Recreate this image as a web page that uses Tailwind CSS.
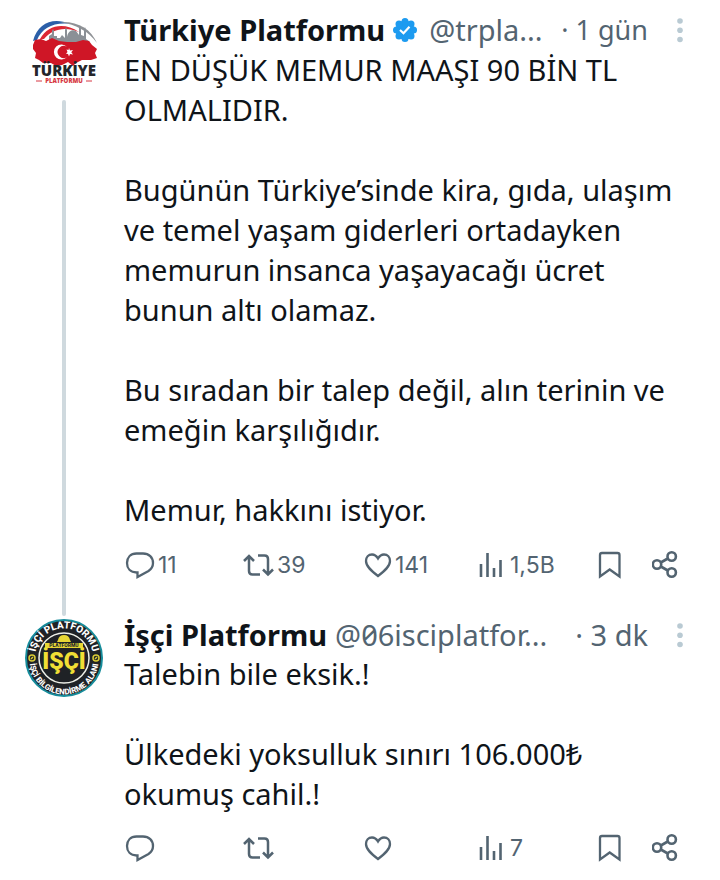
<!DOCTYPE html>
<html lang="tr">
<head>
<meta charset="utf-8">
<meta name="viewport" content="width=device-width, initial-scale=1">
<title>Gönderi</title>
<script src="https://cdn.jsdelivr.net/npm/@tailwindcss/browser@4"></script>
</head>
<body class="bg-white font-['Noto_Sans',sans-serif] text-[#0f1419]">
<svg class="hidden" aria-hidden="true">
  <symbol id="reply" viewBox="0 0 32 32"><path d="M13.500 28V23.500H12.500C6.500 23.500 3 19.500 3 14S6.500 4.500 12.500 4.500H19C25 4.500 29 8.500 29 14C29 17.500 27.500 20 24.500 22Z" fill="none" stroke="currentColor" stroke-width="2.300"/></symbol>
  <symbol id="repost" viewBox="0 0 32 32"><path d="M1 12 6 7 11 12M6 8V22Q6 25.500 9.500 25.500H17M15 6.500H21.500Q25 6.500 25 10V25M20 20.500 25 25.500 30 20.500" fill="none" stroke="currentColor" stroke-width="2.500"/></symbol>
  <symbol id="like" viewBox="0 0 32 32"><path d="M15 27C8.500 22 3 17.500 3 12C3 8 5.500 5.500 9 5.500C11.800 5.500 13.500 7 15 9.500C16.500 7 18.200 5.500 21 5.500C24.500 5.500 27 8 27 12C27 17.500 21.500 22 15 27Z" fill="none" stroke="currentColor" stroke-width="2.300"/></symbol>
  <symbol id="views" viewBox="0 0 32 32"><path d="M3 28V15M9.500 28V4M16 28V19M22.500 28V11" stroke="currentColor" stroke-width="2.600"/></symbol>
  <symbol id="save" viewBox="0 0 32 32"><path d="M4 27.500V6Q4 4 6 4H21.500Q23.500 4 23.500 6V27.500L13.700 20.500Z" fill="none" stroke="currentColor" stroke-width="2.300"/></symbol>
  <symbol id="share" viewBox="0 0 32 32"><g fill="none" stroke="currentColor" stroke-width="2.600"><circle cx="5" cy="15.500" r="4.200"/><circle cx="19.700" cy="7.500" r="4.200"/><circle cx="19.700" cy="23.500" r="4.200"/><path d="M8.800 13.500 15.800 9.500M8.800 17.500 15.800 21.500"/></g></symbol>
  <symbol id="more" viewBox="0 0 8 28"><g fill="#b9cad3"><circle cx="4" cy="5" r="2.800"/><circle cx="4" cy="14.300" r="2.800"/><circle cx="4" cy="23.500" r="2.800"/></g></symbol>
</svg>
<main>
  <article class="flex gap-5 pr-9 pl-6">
    <div class="flex w-20 shrink-0 flex-col items-center gap-2 pt-3">
      <svg class="size-20 shrink-0" viewBox="0 0 80 80" role="img" aria-label="Türkiye Platformu">
        <path d="M9 29C14 10 30 5 46 12C30 10 18 16 13 28Z" fill="#2b5fa8"/>
        <path d="M16 27C24 13 40 10 55 20C41 14 28 17 20 27Z" fill="#dc2733"/>
        <path d="M36 10C54 9 67 17 73 31C64 19 53 13 36 10Z" fill="#8f9296"/>
        <path d="M25 27V24L28 22V19L29 17 30 19V24H33V26H36L38 23 41 26V18L42 15 43 18V25C44 19 48 17 52 19L55 23V16L56 13 57 16V23L60 24V18L61 15 62 18V27L66 30H25Z" fill="#8b9096"/>
        <path d="M9 33 11 28 17 27 22 29 28 26 35 29 43 30 52 30 59 28 65 29 68 33 73 37 71 41 73 46 67 48 58 48 52 51 49 54 44 50 38 53 32 54 27 51 19 51 15 48 11 46 12 41 9 37Z" fill="#cf1626"/>
        <path d="M43 35A7.500 7.500 0 1 0 43 45A6 6 0 1 1 43 35Z" fill="white"/>
        <path d="m45 36 1 2.500 3-.5-1.700 2.300 1.700 2.200-3-.5-1 2.500-1-2.500-2-.3 1.500-1.700-1-2.500 2 .5Z" fill="white"/>
        <text x="40" y="64" text-anchor="middle" font-family="Open Sans, sans-serif" font-size="15" font-weight="800" fill="#24262b">TÜRKİYE</text>
        <path d="M12 69H18M62 69H68" stroke="#d73742"/>
        <text x="40" y="71" text-anchor="middle" font-family="Open Sans, sans-serif" font-size="6" font-weight="800" fill="#d73742">PLATFORMU</text>
      </svg>
      <div class="w-1 flex-1 rounded-full bg-[#cfd9de]"></div>
    </div>
    <div class="min-w-0 flex-1 pt-2.5 pb-4">
      <header class="flex h-10 items-center text-[29px] whitespace-nowrap">
        <h2 class="font-bold">Türkiye Platformu</h2>
        <svg class="mx-1.5 size-7 shrink-0" viewBox="0 0 28 28" role="img" aria-label="Onaylı hesap"><g fill="#1d9bf0"><circle cx="14" cy="14" r="9.500"/><circle cx="14" cy="5.500" r="3.500"/><circle cx="20" cy="8" r="3.500"/><circle cx="22.500" cy="14" r="3.500"/><circle cx="20" cy="20" r="3.500"/><circle cx="14" cy="22.500" r="3.500"/><circle cx="8" cy="20" r="3.500"/><circle cx="5.500" cy="14" r="3.500"/><circle cx="8" cy="8" r="3.500"/></g><path d="m9 14 3.500 3.200 6-6.500" fill="none" stroke="white" stroke-width="2.200"/></svg>
        <a href="#" class="ml-1 text-[#536471]">@trpla...</a>
        <span class="ml-auto text-[27px] text-[#536471]">· 1 gün</span>
        <button type="button" aria-label="Diğer" class="ml-7 shrink-0"><svg class="h-7 w-2"><use href="#more"/></svg></button>
      </header>
      <div class="space-y-10 text-[29px] leading-10">
        <p>EN DÜŞÜK MEMUR MAAŞI 90 BİN TL<br>OLMALIDIR.</p>
        <p>Bugünün Türkiye’sinde kira, gıda, ulaşım<br>ve temel yaşam giderleri ortadayken<br>memurun insanca yaşayacağı ücret<br>bunun altı olamaz.</p>
        <p>Bu sıradan bir talep değil, alın terinin ve<br>emeğin karşılığıdır.</p>
        <p>Memur, hakkını istiyor.</p>
      </div>
      <footer class="flex h-[70px] items-center font-[Inter,sans-serif] text-[23px] text-[#536471]">
        <div class="grid flex-1 grid-cols-[119fr_120fr_115fr_118fr]">
          <button type="button" aria-label="Yanıtla" class="flex items-center gap-0.5"><svg class="size-8"><use href="#reply"/></svg>11</button>
          <button type="button" aria-label="Yeniden gönder" class="flex items-center gap-0.5"><svg class="size-8"><use href="#repost"/></svg>39</button>
          <button type="button" aria-label="Beğen" class="flex items-center"><svg class="size-8"><use href="#like"/></svg>141</button>
          <button type="button" aria-label="Görüntülenme" class="flex items-center"><svg class="size-8"><use href="#views"/></svg>1,5B</button>
        </div>
        <button type="button" aria-label="Kaydet"><svg class="size-8"><use href="#save"/></svg></button>
        <button type="button" aria-label="Paylaş" class="ml-6"><svg class="size-8"><use href="#share"/></svg></button>
      </footer>
    </div>
  </article>
  <article class="flex gap-5 pr-9 pl-6">
    <div class="w-20 shrink-0 pt-0.5">
      <svg class="size-20" viewBox="0 0 80 80" role="img" aria-label="İşçi Platformu">
        <circle cx="40" cy="40" r="38" fill="#1f2226" stroke="#168c9b" stroke-width="2"/>
        <circle cx="40" cy="40" r="25" fill="none" stroke="#eef0e8" stroke-width="1.500"/>
        <defs><path id="top" d="M12 47A29 29 0 1 1 68 47"/><path id="bottom" d="M5.500 42A34.500 34.500 0 0 0 74.500 42"/></defs>
        <g fill="white" font-family="Roboto, sans-serif" font-weight="800" text-anchor="middle">
          <text font-size="10"><textPath href="#top" startOffset="50%">İŞÇİ PLATFORMU</textPath></text>
          <text font-size="8"><textPath href="#bottom" startOffset="50%">İŞÇİ BİLGİLENDİRME ALANI</textPath></text>
        </g>
        <g fill="none" stroke="#d9cb35" stroke-width="1.500"><circle cx="8" cy="40" r="3"/><circle cx="72" cy="40" r="3"/><path d="M7 41 9 39M71 41 73 39"/></g>
        <path d="M34 22Q35 17 40 17T46 22L47 24H33Z" fill="#e7d735"/>
        <path d="M21 25H59V30H21Z" fill="#e7d735"/>
        <text x="40" y="29" text-anchor="middle" font-family="Roboto, sans-serif" font-size="5" font-weight="800" fill="#20252a">PLATFORMU</text>
        <text x="40" y="51" text-anchor="middle" font-family="Roboto, sans-serif" font-size="23" font-weight="900" fill="#f0df35">İŞÇİ</text>
      </svg>
    </div>
    <div class="min-w-0 flex-1">
      <header class="flex h-[38px] items-center text-[29px] whitespace-nowrap">
        <h2 class="font-bold">İşçi Platformu</h2>
        <a href="#" class="ml-2 text-[#536471] slashed-zero">@06isciplatfor...</a>
        <span class="ml-auto text-[#536471]">· 3 dk</span>
        <button type="button" aria-label="Diğer" class="ml-7 shrink-0"><svg class="h-7 w-2"><use href="#more"/></svg></button>
      </header>
      <div class="space-y-10 text-[29px] leading-10">
        <p>Talebin bile eksik.!</p>
        <p>Ülkedeki yoksulluk sınırı 106.000₺<br>okumuş cahil.!</p>
      </div>
      <footer class="flex h-17 items-center font-[Inter,sans-serif] text-[23px] text-[#536471]">
        <div class="grid flex-1 grid-cols-[119fr_120fr_115fr_118fr]">
          <button type="button" aria-label="Yanıtla" class="flex items-center"><svg class="size-8"><use href="#reply"/></svg></button>
          <button type="button" aria-label="Yeniden gönder" class="flex items-center"><svg class="size-8"><use href="#repost"/></svg></button>
          <button type="button" aria-label="Beğen" class="flex items-center"><svg class="size-8"><use href="#like"/></svg></button>
          <button type="button" aria-label="Görüntülenme" class="flex items-center"><svg class="size-8"><use href="#views"/></svg>7</button>
        </div>
        <button type="button" aria-label="Kaydet"><svg class="size-8"><use href="#save"/></svg></button>
        <button type="button" aria-label="Paylaş" class="ml-6"><svg class="size-8"><use href="#share"/></svg></button>
      </footer>
    </div>
  </article>
</main>
</body>
</html>
